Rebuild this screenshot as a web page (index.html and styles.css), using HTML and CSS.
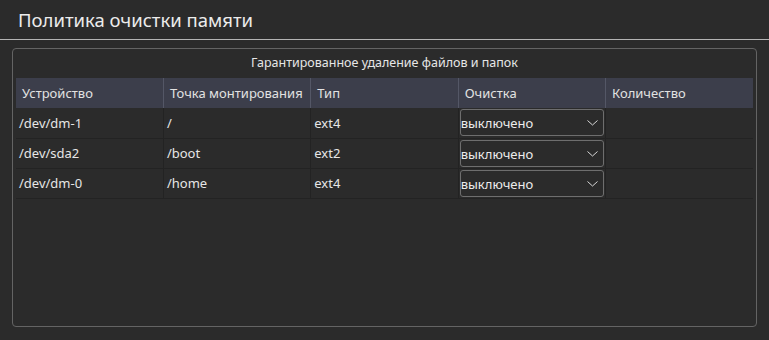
FILE: index.html
```html
<!DOCTYPE html>
<html lang="ru">
<head>
    <meta charset="UTF-8">
    <title>Политика очистки памяти</title>
    <link rel="stylesheet" href="styles.css">
</head>
<body>
    <div class="page-title">Политика очистки памяти</div>

    <div class="group-box">
        <div class="group-title">Гарантированное удаление файлов и папок</div>

        <table class="devices">
            <thead>
                <tr>
                    <th>Устройство</th>
                    <th>Точка монтирования</th>
                    <th>Тип</th>
                    <th>Очистка</th>
                    <th>Количество</th>
                </tr>
            </thead>
            <tbody>
                <tr>
                    <td>/dev/dm-1</td>
                    <td>/</td>
                    <td>ext4</td>
                    <td class="combo-cell"><div class="combo">выключено<svg class="arrow" width="11" height="6" viewBox="0 0 11 6"><path d="M0.5 0.5 L5.5 5 L10.5 0.5" fill="none" stroke="#d8d8d8" stroke-width="1"/></svg></div></td>
                    <td></td>
                </tr>
                <tr>
                    <td>/dev/sda2</td>
                    <td>/boot</td>
                    <td>ext2</td>
                    <td class="combo-cell"><div class="combo">выключено<svg class="arrow" width="11" height="6" viewBox="0 0 11 6"><path d="M0.5 0.5 L5.5 5 L10.5 0.5" fill="none" stroke="#d8d8d8" stroke-width="1"/></svg></div></td>
                    <td></td>
                </tr>
                <tr>
                    <td>/dev/dm-0</td>
                    <td>/home</td>
                    <td>ext4</td>
                    <td class="combo-cell"><div class="combo">выключено<svg class="arrow" width="11" height="6" viewBox="0 0 11 6"><path d="M0.5 0.5 L5.5 5 L10.5 0.5" fill="none" stroke="#d8d8d8" stroke-width="1"/></svg></div></td>
                    <td></td>
                </tr>
            </tbody>
        </table>
    </div>
</body>
</html>
```

FILE: styles.css
```css
body {
    margin: 0;
    background-color: #2b2b2b;
    color: #e6e6e6;
    font-family: "Noto Sans", "Open Sans", sans-serif;
    font-size: 13px;
    width: 769px;
    height: 340px;
    overflow: hidden;
}
.page-title {
    height: 40px;
    line-height: 40px;
    padding-left: 18px;
    font-size: 18.5px;
    color: #ececec;
    border-bottom: 1px solid #b4b4b4;
    box-sizing: border-box;
}
.group-box {
    margin: 8px 12px 0 12px;
    height: 279px;
    box-sizing: border-box;
    border: 1px solid #646464;
    border-radius: 4px;
    padding: 0 3px;
}
.group-title {
    height: 29px;
    line-height: 28px;
    text-align: center;
    font-size: 12.5px;
}
.devices {
    width: 737px;
    border-collapse: collapse;
    table-layout: fixed;
}
.devices th {
    background-color: #3c3e4b;
    height: 30px;
    padding: 0 0 0 6px;
    text-align: left;
    font-weight: normal;
    color: #e2e2e2;
    border-left: 1px solid #545766;
}
.devices th:first-child {
    border-left: none;
}
.devices td {
    height: 30px;
    box-sizing: border-box;
    padding: 0 0 0 3px;
    border-left: 1px solid #232323;
    border-bottom: 1px solid #232323;
    color: #e6e6e6;
}
.devices td:first-child {
    border-left: none;
}
.devices td.combo-cell {
    padding: 0 1px 0 1px;
}
.combo {
    position: relative;
    height: 27px;
    line-height: 26px;
    box-sizing: border-box;
    border: 1px solid #6e6e6e;
    border-radius: 3px;
    color: #ececec;
}
.arrow {
    position: absolute;
    right: 5px;
    top: 10px;
}
```
